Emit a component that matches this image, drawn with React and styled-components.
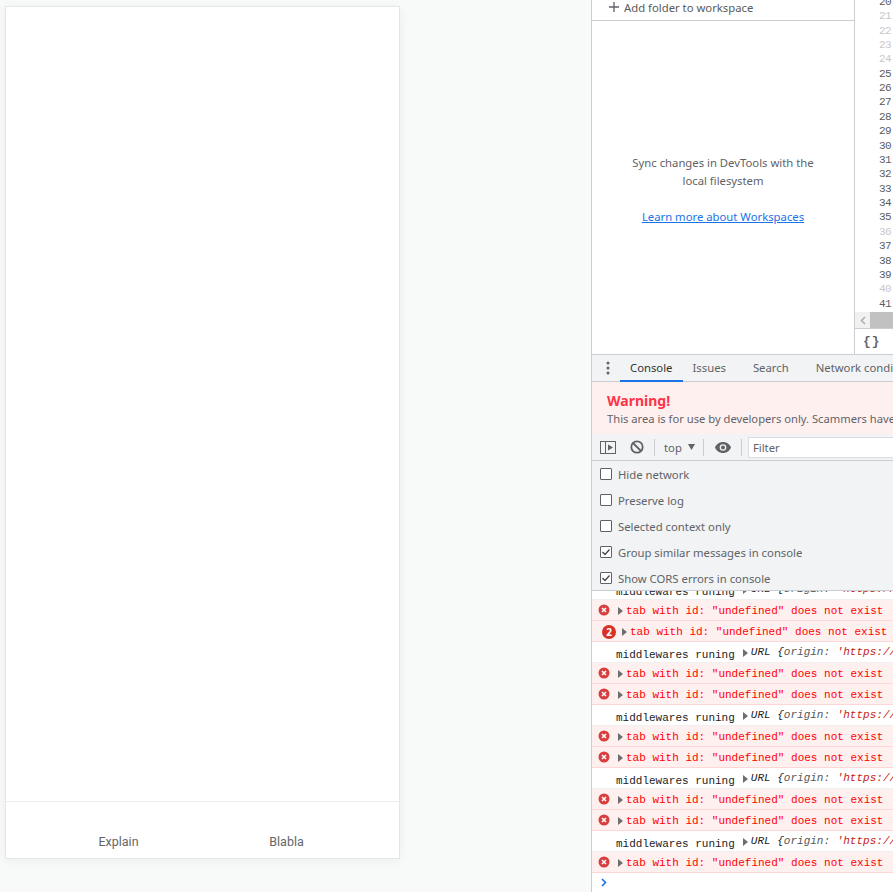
import React from 'react';
import styled, { createGlobalStyle } from 'styled-components';

const GlobalStyle = createGlobalStyle`
  html, body { margin: 0; padding: 0; background: #f8f9f9; }
  * { box-sizing: border-box; }
`;

const uiFont = `"Noto Sans", "Open Sans", sans-serif`;
const monoFont = `"Liberation Mono", "DejaVu Sans Mono", monospace`;

const Page = styled.div`
  display: flex;
  width: 893px;
  height: 892px;
  overflow: hidden;
`;

const Stage = styled.div`
  width: 591px;
  flex: none;
  padding: 6px 0 0 5px;
`;

const Card = styled.div`
  display: flex;
  flex-direction: column;
  width: 395px;
  height: 853px;
  background: #fff;
  border: 1px solid #e6e6e6;
  box-shadow: 0 2px 10px rgba(0, 0, 0, 0.05);
`;

const CardBody = styled.div`
  flex: 1;
`;

const TabBar = styled.div`
  display: grid;
  grid-template-columns: 168px 168px;
  justify-content: center;
  height: 57px;
  border-top: 1px solid #ececec;
  padding-top: 32px;
`;

const BottomTab = styled.div`
  text-align: center;
  font: 12.5px/16px Roboto, sans-serif;
  color: #666;
`;

const DevTools = styled.div`
  flex: 1;
  min-width: 0;
  display: flex;
  flex-direction: column;
  background: #fff;
  border-left: 1px solid #cacdd1;
  font-family: ${uiFont};
  font-size: 11.3px;
  overflow: hidden;
`;

const SourcesPanel = styled.div`
  display: flex;
  height: 355px;
  flex: none;
  border-bottom: 1px solid #cacdd1;
`;

const Workspace = styled.div`
  width: 262px;
  flex: none;
  display: flex;
  flex-direction: column;
`;

const AddFolder = styled.div`
  display: flex;
  align-items: center;
  gap: 5px;
  height: 21px;
  padding: 0 0 6px 17px;
  border-bottom: 1px solid #cacdd1;
  color: #5a5a5a;
`;

const Hint = styled.div`
  flex: 1;
  display: flex;
  flex-direction: column;
  align-items: center;
  justify-content: center;
  padding-top: 5px;
  line-height: 18px;
  color: #5f6368;
  text-align: center;
`;

const HintLink = styled.a`
  margin-top: 18px;
  color: #1a73e8;
  text-decoration: underline;
`;

const EditorColumn = styled.div`
  flex: 1;
  display: flex;
  flex-direction: column;
  min-width: 0;
  border-left: 1px solid #cacdd1;
`;

const Gutter = styled.div`
  flex: 1;
  min-height: 0;
  display: flex;
  flex-direction: column;
  justify-content: flex-end;
  overflow: hidden;
  padding: 0 0 1px 24px;
`;

const LineNumber = styled.div`
  flex: none;
  font: 11px/14.38px ${monoFont};
  letter-spacing: -0.55px;
  color: ${p => (p.$muted ? '#c9c9c9' : '#5c5c5c')};
`;

const HScroll = styled.div`
  display: flex;
  height: 16px;
  flex: none;
`;

const ScrollArrow = styled.div`
  width: 15px;
  display: flex;
  align-items: center;
  justify-content: center;
  background: #f1f1f1;
`;

const ScrollThumb = styled.div`
  flex: 1;
  background: #c1c1c1;
`;

const EditorFooter = styled.div`
  height: 26px;
  flex: none;
  display: flex;
  align-items: center;
  padding-left: 8px;
  border-top: 1px solid #cacdd1;
  font: bold 13px ${monoFont};
  letter-spacing: 1px;
  color: #5f6368;
`;

const DrawerTabs = styled.div`
  display: flex;
  height: 27px;
  flex: none;
  background: #f1f3f4;
  border-bottom: 1px solid #cacdd1;
  white-space: nowrap;
`;

const KebabBox = styled.div`
  width: 28px;
  flex: none;
  display: flex;
  align-items: center;
  justify-content: center;
  padding-left: 4px;
`;

const DrawerTab = styled.div`
  display: flex;
  align-items: center;
  height: 27px;
  padding: 0 10px;
  margin-left: ${p => p.$gap || 0}px;
  color: ${p => (p.$active ? '#333' : '#5f6368')};
  border-bottom: 2px solid ${p => (p.$active ? '#1a73e8' : 'transparent')};
`;

const WarningBox = styled.div`
  height: 52px;
  flex: none;
  padding: 9px 0 0 15px;
  background: #fff0f0;
  white-space: nowrap;
`;

const WarningTitle = styled.div`
  font-size: 14px;
  line-height: 19px;
  font-weight: 700;
  color: #ff3347;
`;

const WarningText = styled.div`
  font-size: 11.2px;
  line-height: 17px;
  color: #5f6368;
`;

const Toolbar = styled.div`
  display: flex;
  align-items: center;
  height: 27px;
  flex: none;
  background: #f1f3f4;
  border-bottom: 1px solid #cacdd1;
  padding-left: 8px;
`;

const ToolSep = styled.div`
  width: 1px;
  height: 17px;
  background: #cacdd1;
  margin: ${p => p.$margin};
`;

const ClearButton = styled.div`
  display: flex;
  margin-left: 14px;
`;

const ContextLabel = styled.div`
  display: flex;
  align-items: center;
  gap: 6px;
  color: #5f6368;
`;

const FilterBox = styled.div`
  flex: 1;
  height: 21px;
  display: flex;
  align-items: center;
  padding-left: 4px;
  background: #fff;
  border: 1px solid #dadce0;
  border-right: none;
  color: #5f6368;
`;

const Settings = styled.div`
  height: 130px;
  flex: none;
  display: flex;
  flex-direction: column;
  background: #f1f3f4;
  border-bottom: 1px solid #cacdd1;
`;

const SettingRow = styled.label`
  display: flex;
  align-items: center;
  gap: 6px;
  height: 26px;
  flex: none;
  padding-left: 8px;
  color: #5f6368;
`;

const CheckBox = styled.span`
  width: 12px;
  height: 12px;
  flex: none;
  display: flex;
  background: #fff;
  border: 1px solid #5f6368;
  border-radius: 1px;
`;

const ConsoleLog = styled.div`
  flex: 1;
  min-height: 0;
  display: flex;
  flex-direction: column;
  justify-content: flex-end;
  overflow: hidden;
  font: 11px/14px ${monoFont};
  white-space: nowrap;
`;

const LogRow = styled.div`
  display: flex;
  align-items: center;
  height: 21px;
  flex: none;
  border-bottom: 1px solid ${p => (p.$error ? '#ffd6d6' : '#f0f0f0')};
  background: ${p => (p.$error ? '#fff0f0' : '#fff')};
  color: ${p => (p.$error ? '#f00' : '#222')};
  padding: ${p => (p.$error ? 2 : 6)}px 0 0 ${p => p.$indent}px;
`;

const CountBadge = styled.span`
  width: 14px;
  height: 14px;
  flex: none;
  margin-right: 6px;
  border-radius: 50%;
  background: #d93025;
  color: #fff;
  font: bold 10px/14px ${uiFont};
  text-align: center;
`;

const Expander = styled.span`
  width: 0;
  height: 0;
  flex: none;
  margin: 0 3px ${p => p.$lift || 0}px ${p => p.$left || 0}px;
  border-left: 5px solid #6e6e6e;
  border-top: 4px solid transparent;
  border-bottom: 4px solid transparent;
`;

const UrlObject = styled.span`
  margin-bottom: 6px;
  font-style: italic;
  color: #222;
`;

const ObjectKey = styled.span`
  color: #565656;
`;

const ObjectString = styled.span`
  color: #c41a16;
`;

const Prompt = styled.div`
  flex: none;
  height: 19px;
  display: flex;
  align-items: center;
  padding-left: 9px;
`;

const ErrorIcon = () => (
  <svg width="12" height="12" viewBox="0 0 12 12" style={{ flex: 'none', marginRight: 8, marginTop: -2 }}>
    <circle cx="6" cy="6" r="5.5" fill="#d93d3d" />
    <path d="M4 4l4 4M8 4l-4 4" stroke="#fff" strokeWidth="1.6" />
  </svg>
);

const PlusIcon = () => (
  <svg width="10" height="10" viewBox="0 0 10 10">
    <path d="M5 0v10M0 5h10" stroke="#5f6368" strokeWidth="1.3" />
  </svg>
);

const Kebab = () => (
  <svg width="4" height="14" viewBox="0 0 4 14">
    <circle cx="2" cy="2" r="1.5" fill="#5f6368" />
    <circle cx="2" cy="7" r="1.5" fill="#5f6368" />
    <circle cx="2" cy="12" r="1.5" fill="#5f6368" />
  </svg>
);

const SidebarToggle = () => (
  <svg width="16" height="13" viewBox="0 0 16 13">
    <rect x="0.5" y="0.5" width="15" height="12" fill="none" stroke="#5f6368" />
    <path d="M5.5 0v13" stroke="#5f6368" />
    <path d="M8 3.5l5 3-5 3z" fill="#5f6368" />
  </svg>
);

const BlockIcon = () => (
  <svg width="14" height="14" viewBox="0 0 14 14">
    <circle cx="7" cy="7" r="5.7" fill="none" stroke="#5f6368" strokeWidth="1.8" />
    <path d="M3 3l8 8" stroke="#5f6368" strokeWidth="1.8" />
  </svg>
);

const EyeIcon = () => (
  <svg width="16" height="11" viewBox="0 0 16 11">
    <path d="M8 0C4.4 0 1.4 2.2 0 5.5 1.4 8.8 4.4 11 8 11s6.600-2.200 8-5.500C14.600 2.200 11.600 0 8 0z" fill="#5f6368" />
    <circle cx="8" cy="5.500" r="3.300" fill="#f1f3f4" />
    <circle cx="8" cy="5.500" r="2" fill="#5f6368" />
  </svg>
);

const Check = () => (
  <svg width="10" height="10" viewBox="0 0 10 10">
    <path d="M1.500 5l2.500 2.500 4.500-5" fill="none" stroke="#444" strokeWidth="1.300" />
  </svg>
);

const lineNumbers = Array.from({ length: 22 }, (_, i) => i + 20);
const mutedLines = [21, 22, 23, 24, 36, 40];

const settings = [
  ['Hide network', false],
  ['Preserve log', false],
  ['Selected context only', false],
  ['Group similar messages in console', true],
  ['Show CORS errors in console', true],
];

const rows = ['log', 'err', 'count', 'log', 'err', 'err', 'log', 'err', 'err', 'log', 'err', 'err', 'log', 'err'];
const errorText = 'tab with id: "undefined" does not exist';

const ConsoleRow = ({ kind }) => {
  if (kind === 'log') {
    return (
      <LogRow $indent={24}>
        middlewares runing <Expander $left={8} $lift={4} />
        <UrlObject>
          URL {'{'}<ObjectKey>origin:</ObjectKey> <ObjectString>'https://</ObjectString>
        </UrlObject>
      </LogRow>
    );
  }
  if (kind === 'count') {
    return (
      <LogRow $error $indent={10}>
        <CountBadge>2</CountBadge>
        <Expander />
        {errorText}
      </LogRow>
    );
  }
  return (
    <LogRow $error $indent={6}>
      <ErrorIcon />
      <Expander />
      {errorText}
    </LogRow>
  );
};

export default function App() {
  return (
    <Page>
      <GlobalStyle />
      <Stage>
        <Card>
          <CardBody />
          <TabBar>
            <BottomTab>Explain</BottomTab>
            <BottomTab>Blabla</BottomTab>
          </TabBar>
        </Card>
      </Stage>
      <DevTools>
        <SourcesPanel>
          <Workspace>
            <AddFolder>
              <PlusIcon />
              Add folder to workspace
            </AddFolder>
            <Hint>
              <div>Sync changes in DevTools with the</div>
              <div>local filesystem</div>
              <HintLink>Learn more about Workspaces</HintLink>
            </Hint>
          </Workspace>
          <EditorColumn>
            <Gutter>
              {lineNumbers.map(n => (
                <LineNumber key={n} $muted={mutedLines.includes(n)}>{n}</LineNumber>
              ))}
            </Gutter>
            <HScroll>
              <ScrollArrow>
                <svg width="6" height="9" viewBox="0 0 6 9">
                  <path d="M5 1L1.500 4.500 5 8" fill="none" stroke="#b0b0b0" strokeWidth="1.600" />
                </svg>
              </ScrollArrow>
              <ScrollThumb />
            </HScroll>
            <EditorFooter>{'{}'}</EditorFooter>
          </EditorColumn>
        </SourcesPanel>
        <DrawerTabs>
          <KebabBox><Kebab /></KebabBox>
          <DrawerTab $active>Console</DrawerTab>
          <DrawerTab>Issues</DrawerTab>
          <DrawerTab $gap={7}>Search</DrawerTab>
          <DrawerTab $gap={7}>Network conditions</DrawerTab>
        </DrawerTabs>
        <WarningBox>
          <WarningTitle>Warning!</WarningTitle>
          <WarningText>This area is for use by developers only. Scammers have used this</WarningText>
        </WarningBox>
        <Toolbar>
          <SidebarToggle />
          <ClearButton><BlockIcon /></ClearButton>
          <ToolSep $margin="0 9px 0 10px" />
          <ContextLabel>
            top
            <svg width="7" height="6" viewBox="0 0 7 6"><path d="M0 0h7L3.500 6z" fill="#5f6368" /></svg>
          </ContextLabel>
          <ToolSep $margin="0 11px 0 8px" />
          <EyeIcon />
          <ToolSep $margin="0 6px 0 10px" />
          <FilterBox>Filter</FilterBox>
        </Toolbar>
        <Settings>
          {settings.map(([label, checked]) => (
            <SettingRow key={label}>
              <CheckBox>{checked && <Check />}</CheckBox>
              {label}
            </SettingRow>
          ))}
        </Settings>
        <ConsoleLog>
          {rows.map((kind, i) => <ConsoleRow key={i} kind={kind} />)}
        </ConsoleLog>
        <Prompt>
          <svg width="6" height="9" viewBox="0 0 6 9">
            <path d="M1 1l3.500 3.500L1 8" fill="none" stroke="#1a73e8" strokeWidth="1.600" />
          </svg>
        </Prompt>
      </DevTools>
    </Page>
  );
}
